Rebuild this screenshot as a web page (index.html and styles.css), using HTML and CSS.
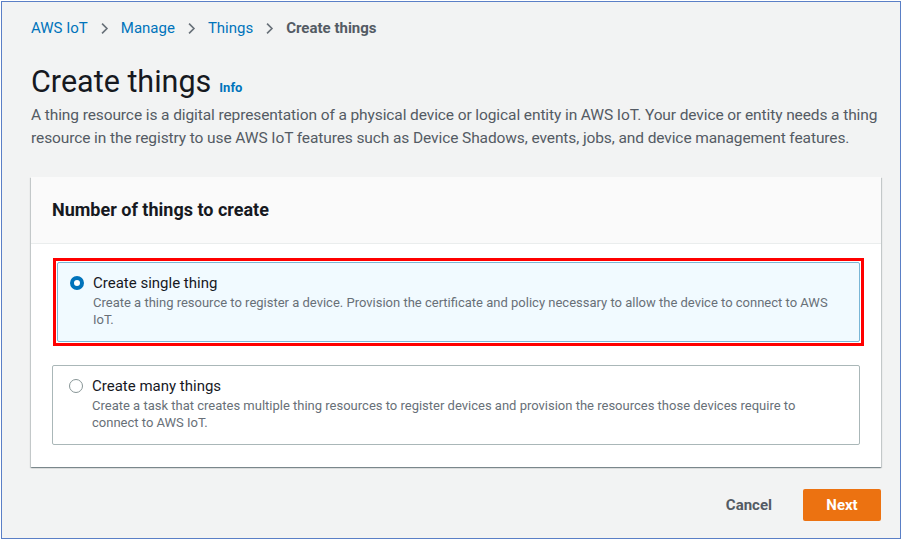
FILE: index.html
```html
<!DOCTYPE html>
<html>
<head>
<meta charset="utf-8">
<link rel="stylesheet" href="styles.css">
</head>
<body>
<div class="frame">
  <nav class="crumbs">
    <a class="crumb">AWS IoT</a>
    <svg class="sep" viewBox="0 0 16 16"><path d="M5 2l6 6-6 6" fill="none" stroke="#687078" stroke-width="2"/></svg>
    <a class="crumb">Manage</a>
    <svg class="sep" viewBox="0 0 16 16"><path d="M5 2l6 6-6 6" fill="none" stroke="#687078" stroke-width="2"/></svg>
    <a class="crumb">Things</a>
    <svg class="sep" viewBox="0 0 16 16"><path d="M5 2l6 6-6 6" fill="none" stroke="#687078" stroke-width="2"/></svg>
    <span class="crumb current">Create things</span>
  </nav>
  <div class="title-row">
    <h1 class="title">Create things</h1>
    <span class="info">Info</span>
  </div>
  <p class="desc">A thing resource is a digital representation of a physical device or logical entity in AWS IoT. Your device or entity needs a thing resource in the registry to use AWS IoT features such as Device Shadows, events, jobs, and device management features.</p>

  <section class="card">
    <header class="card-head">
      <h2 class="card-title">Number of things to create</h2>
    </header>
    <div class="card-body">
      <div class="highlight">
        <div class="tile selected">
          <span class="radio on"></span>
          <div class="tile-text">
            <div class="tile-title">Create single thing</div>
            <div class="tile-desc">Create a thing resource to register a device. Provision the certificate and policy necessary to allow the device to connect to AWS IoT.</div>
          </div>
        </div>
      </div>
      <div class="tile plain">
        <span class="radio"></span>
        <div class="tile-text">
          <div class="tile-title">Create many things</div>
          <div class="tile-desc">Create a task that creates multiple thing resources to register devices and provision the resources those devices require to connect to AWS IoT.</div>
        </div>
      </div>
    </div>
  </section>

  <div class="actions">
    <span class="cancel">Cancel</span>
    <span class="next">Next</span>
  </div>
</div>
</body>
</html>
```
FILE: styles.css
```css
html, body {
  margin: 0;
  padding: 0;
  background: #ffffff;
}
body {
  font-family: Roboto, "Open Sans", "Liberation Sans", sans-serif;
  color: #16191f;
}
.frame {
  margin: 1px;
  width: 900px;
  height: 538px;
  box-sizing: border-box;
  border: 1px solid #5a7fc6;
  background: #f2f3f3;
  padding: 0 20px 0 29px;
}
.crumbs {
  display: flex;
  align-items: center;
  height: 20px;
  margin-top: 16px;
  font-size: 15px;
}
.crumb {
  color: #0073bb;
}
.crumb.current {
  color: #545b64;
  font-weight: 700;
}
.sep {
  width: 13px;
  height: 13px;
  margin: 0 10px 0 10px;
}
.title-row {
  display: flex;
  align-items: baseline;
  margin-top: 27px;
}
.title {
  margin: 0;
  font-size: 30.5px;
  font-weight: 400;
  line-height: 34px;
  color: #16191f;
}
.info {
  margin-left: 8px;
  font-size: 13px;
  font-weight: 700;
  color: #0073bb;
}
.desc {
  margin: 5px 0 0;
  font-size: 15.5px;
  line-height: 23px;
  color: #545b64;
  letter-spacing: -0.1px;
  width: 862px;
}
.card {
  margin-top: 27px;
  width: 850px;
  background: #ffffff;
  box-shadow: 0 1px 1px 0 rgba(0, 28, 36, 0.3), 1px 1px 1px 0 rgba(0, 28, 36, 0.15), -1px 1px 1px 0 rgba(0, 28, 36, 0.15);
}
.card-head {
  height: 67px;
  box-sizing: border-box;
  background: #fafafa;
  border-bottom: 1px solid #eaeded;
  padding: 0 21px 2px;
  display: flex;
  align-items: center;
}
.card-title {
  margin: 0;
  font-size: 18px;
  font-weight: 700;
  color: #16191f;
}
.card-body {
  padding: 14px 21px 22px 21px;
  display: flex;
  flex-direction: column;
  gap: 19px;
}
.highlight {
  border: 3px solid #ff0000;
  padding: 1px;
  margin: 0 -4px 0 1px;
}
.tile {
  display: flex;
  gap: 9px;
  padding: 9px 16px 12px 16px;
  border-radius: 2px;
  box-sizing: border-box;
}
.tile.selected {
  background: #f1faff;
  border: 1px solid #7ab6d6;
  padding-left: 12px;
  padding-right: 26px;
  min-height: 80px;
}
.tile.plain {
  border: 1px solid #aab7b8;
  min-height: 80px;
  padding-right: 26px;
}
.radio {
  flex: none;
  width: 14px;
  height: 14px;
  margin-top: 4px;
  border-radius: 50%;
  box-sizing: border-box;
  border: 1px solid #879596;
  background: #fff;
}
.radio.on {
  border: 4px solid #0073bb;
}
.tile-text {
  display: flex;
  flex-direction: column;
}
.tile-title {
  font-size: 15px;
  line-height: 22px;
  color: #16191f;
}
.tile-desc {
  font-size: 13px;
  line-height: 17px;
  color: #687078;
  letter-spacing: 0;
}
.actions {
  display: flex;
  justify-content: flex-end;
  align-items: center;
  gap: 31px;
  margin-top: 22px;
  width: 850px;
}
.cancel {
  font-size: 15px;
  font-weight: 700;
  color: #545b64;
}
.next {
  display: flex;
  align-items: center;
  justify-content: center;
  width: 78px;
  height: 32px;
  background: #ec7211;
  border-radius: 2px;
  color: #ffffff;
  font-size: 15px;
  font-weight: 700;
}
```
